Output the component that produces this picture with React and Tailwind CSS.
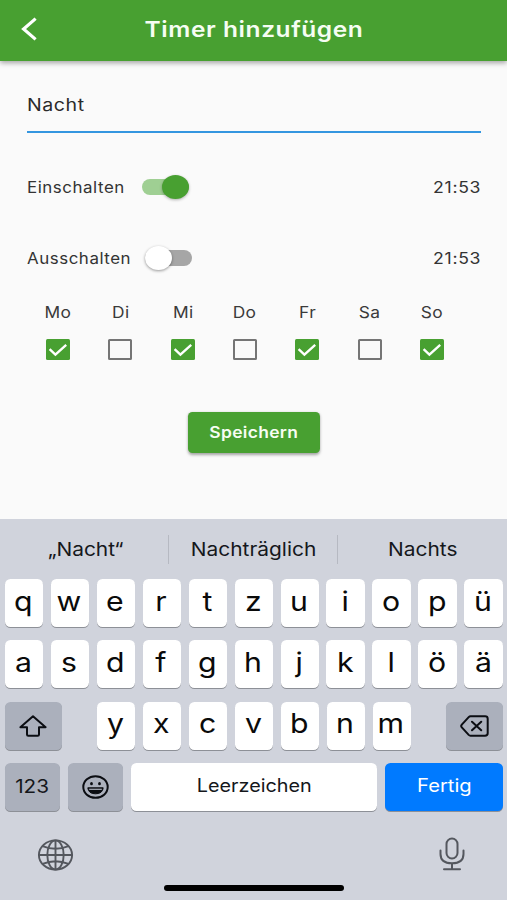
import React from "react";

const DAYS = [
  { name: "Mo", on: true },
  { name: "Di", on: false },
  { name: "Mi", on: true },
  { name: "Do", on: false },
  { name: "Fr", on: true },
  { name: "Sa", on: false },
  { name: "So", on: true },
];

// Horizontally widened label
function Label({ className = "", children }) {
  return <span className={`inline-block whitespace-nowrap ${className}`}>{children}</span>;
}

function Header() {
  return (
    <header className="relative z-10 flex h-[61px] items-center bg-[#48a031] pb-[4px] shadow-[0_2px_5px_rgba(0,0,0,0.35)]">
      <svg className="ml-[20px] h-[24px] w-[18px]" viewBox="0 0 18 24" fill="none" stroke="#fff" strokeWidth="3.2">
        <path d="M15.6 1.6 3.6 12l12 10.4" />
      </svg>
      <h1 className="flex-1 pr-[38px] text-center text-[21.5px] leading-[30px] font-[560] text-[#f6fdf3]">
        <Label className="scale-x-[1.14] tracking-[0.5px]">Timer hinzufügen</Label>
      </h1>
    </header>
  );
}

function Toggle({ on }) {
  return on ? (
    <div className="flex h-[16px] w-[47px] items-center justify-end rounded-full bg-[#9fcf93]">
      <div className="h-[24px] w-[27px] shrink-0 rounded-[50%] bg-[#48a031] shadow-[0_1px_3px_rgba(0,0,0,0.3)]" />
    </div>
  ) : (
    <div className="flex h-[16px] w-[47px] items-center rounded-full bg-[#a6a6a6]">
      <div className="h-[24px] w-[27px] shrink-0 rounded-[50%] bg-white shadow-[0_1px_3px_rgba(0,0,0,0.4)]" />
    </div>
  );
}

function SwitchRow({ label, labelWidth, on, time }) {
  return (
    <div className="flex h-[24px] items-center text-[15.5px] text-[#333]">
      <div className={labelWidth}>
        <Label className="origin-left scale-x-[1.09] pt-px tracking-[0.5px]">{label}</Label>
      </div>
      <Toggle on={on} />
      <Label className="ml-auto origin-right scale-x-[1.14] pt-px tracking-[0.6px]">{time}</Label>
    </div>
  );
}

function Checkbox({ on }) {
  return on ? (
    <div className="flex h-[21px] w-[24px] items-center justify-center rounded-[1.5px] bg-[#48a031]">
      <svg className="h-[14px] w-[20px]" viewBox="0 0 20 14" fill="none" stroke="#fff" strokeWidth="2.4">
        <path d="M1.6 6.2 7.4 11.6 18.2 1.8" />
      </svg>
    </div>
  ) : (
    <div className="h-[21px] w-[24px] rounded-[1.5px] border-2 border-[#757575]" />
  );
}

function Key({ children, className = "w-[38.5px] bg-white" }) {
  return (
    <div className={`flex h-[48px] shrink-0 items-center justify-center rounded-[5.5px] shadow-[0_1px_0_#8d9097] ${className}`}>
      {children}
    </div>
  );
}

function Letters({ chars }) {
  return chars.split("").map((c) => (
    <Key key={c}>
      <Label className="scale-x-[1.12] pr-px pb-[3px] text-[27px] leading-[36px] text-[#0a0a0a]">{c}</Label>
    </Key>
  ));
}

function Keyboard() {
  return (
    <section className="flex h-[381px] flex-col bg-[#d0d3dc] text-[#15171b]">
      <div className="flex h-[60px] items-center text-[18.5px]">
        <div className="w-[168px] pl-[3px] text-center">
          <Label className="scale-x-[1.13] pt-px">„Nacht“</Label>
        </div>
        <div className="h-[29px] w-px bg-[#b6b9c2]" />
        <div className="w-[168px] pl-[2px] text-center">
          <Label className="scale-x-[1.13] pt-px">Nachträglich</Label>
        </div>
        <div className="h-[29px] w-px bg-[#b6b9c2]" />
        <div className="flex-1 text-center">
          <Label className="scale-x-[1.13] pt-px">Nachts</Label>
        </div>
      </div>
      <div className="flex flex-col gap-[13.4px] pr-[4px] pl-[4.6px]">
        <div className="flex justify-between">
          <Letters chars="qwertzuiopü" />
        </div>
        <div className="flex justify-between">
          <Letters chars="asdfghjklöä" />
        </div>
        <div className="flex justify-between">
          <Key className="w-[57px] bg-[#abb0bc]">
            <svg className="mr-px h-[22px] w-[28px]" viewBox="0 0 28 22" fill="none" stroke="#0b0d12" strokeWidth="2" strokeLinejoin="round">
              <path d="M14 1.3 26.6 12.2H20v7.3q0 1.2-1.3 1.2H9.3Q8 20.7 8 19.5V12.2H1.4Z" />
            </svg>
          </Key>
          <div className="flex gap-[7.5px]">
            <Letters chars="yxcvbnm" />
          </div>
          <Key className="w-[57px] bg-[#abb0bc]">
            <svg className="h-[22px] w-[29px]" viewBox="0 0 29 22" fill="none" stroke="#0b0d12" strokeWidth="2" strokeLinejoin="round" strokeLinecap="round">
              <path d="M10.5 1.3H25q2.7 0 2.7 2.4V18.3q0 2.4-2.7 2.4H10.5q-1 0-1.8-.8L1.8 12.4q-1.2-1.4 0-2.8L8.7 2.1q.8-.8 1.8-.8ZM12 6.7l9.2 8.6M21.2 6.7l-9.2 8.6" />
            </svg>
          </Key>
        </div>
        <div className="flex justify-between">
          <Key className="w-[55px] bg-[#abb0bc]">
            <Label className="scale-x-[1.12] text-[18.5px]">123</Label>
          </Key>
          <Key className="w-[55.5px] bg-[#abb0bc]">
            <svg className="h-[24px] w-[27px]" viewBox="0 0 27 24" fill="none" stroke="#0b0d12" strokeWidth="2">
              <ellipse cx="13.5" cy="12" rx="12.2" ry="10.8" />
              <ellipse cx="9.5" cy="8.7" rx="1.4" ry="1.6" fill="#0b0d12" stroke="none" />
              <ellipse cx="17.5" cy="8.7" rx="1.4" ry="1.6" fill="#0b0d12" stroke="none" />
              <path d="M5.8 12.8h15.4q-.6 6-7.7 6t-7.7-6Z" fill="#0b0d12" strokeWidth="1" strokeLinejoin="round" />
              <path d="M7.2 14.3h12.6" stroke="#abb0bc" strokeWidth="1.2" />
            </svg>
          </Key>
          <Key className="w-[246px] bg-white">
            <Label className="scale-x-[1.1] pb-[3px] text-[18px]">Leerzeichen</Label>
          </Key>
          <Key className="w-[118px] bg-[#007aff] text-white">
            <Label className="scale-x-[1.12] pb-[3px] text-[18px]">Fertig</Label>
          </Key>
        </div>
      </div>
      <div className="mt-[25.5px] flex items-start justify-between pr-[42px] pl-[37px]">
        <svg className="mt-[2px] h-[32px] w-[37px]" viewBox="0 0 37 32" fill="none" stroke="#54575e" strokeWidth="1.9">
          <ellipse cx="18.5" cy="16" rx="16.6" ry="14.6" />
          <ellipse cx="18.5" cy="16" rx="8.2" ry="14.6" />
          <path d="M18.5 1.4v29.2M1.9 16h33.2M5.5 7.2q13 5.2 26 0M5.5 24.8q13-5.2 26 0" />
        </svg>
        <svg className="h-[34px] w-[26px]" viewBox="0 0 26 34" fill="none" stroke="#54575e" strokeWidth="2" strokeLinecap="round">
          <rect x="7.5" y="1.5" width="11" height="20" rx="5.5" />
          <path d="M1.5 13.5v3.5q0 9.3 11.5 9.3T24.5 17v-3.5M13 26.5v5.5M5 32.2h16" />
        </svg>
      </div>
      <div className="mx-auto mt-auto mb-[9px] h-[6px] w-[180px] rounded-full bg-black" />
    </section>
  );
}

export default function App() {
  return (
    <div className="flex h-[900px] w-[507px] flex-col overflow-hidden bg-[#fafafa] font-['Inter','Liberation_Sans',sans-serif]">
      <Header />
      <main className="flex flex-1 flex-col pr-[26px] pl-[27px] pt-[29px]">
        <div className="flex h-[43px] items-start border-b-2 border-[#3496e0] text-[17px] leading-[30px] text-[#2b2b2b]">
          <Label className="origin-left scale-x-[1.15] tracking-[0.5px]">Nacht</Label>
        </div>
        <div className="mt-[42px] flex flex-col gap-[47px]">
          <SwitchRow label="Einschalten" labelWidth="w-[115.4px]" on time="21:53" />
          <SwitchRow label="Ausschalten" labelWidth="w-[117.5px]" on={false} time="21:53" />
        </div>
        <div className="mt-[33px] flex">
          {DAYS.map((d) => (
            <div key={d.name} className="flex w-[62.3px] flex-col items-center text-[15.5px] leading-[20px] text-[#3a3a3a]">
              <Label className="mb-[16px] scale-x-[1.12] tracking-[0.3px]">{d.name}</Label>
              <Checkbox on={d.on} />
            </div>
          ))}
        </div>
        <button className="mx-auto mt-[52px] flex h-[41px] w-[132px] items-center justify-center rounded-[4.5px] bg-[#48a031] pb-[2px] text-[16px] font-semibold text-[#f6fdf3] shadow-[0_1.5px_3px_rgba(0,0,0,0.35)]">
          <Label className="scale-x-[1.09] tracking-[0.3px]">Speichern</Label>
        </button>
      </main>
      <Keyboard />
    </div>
  );
}
